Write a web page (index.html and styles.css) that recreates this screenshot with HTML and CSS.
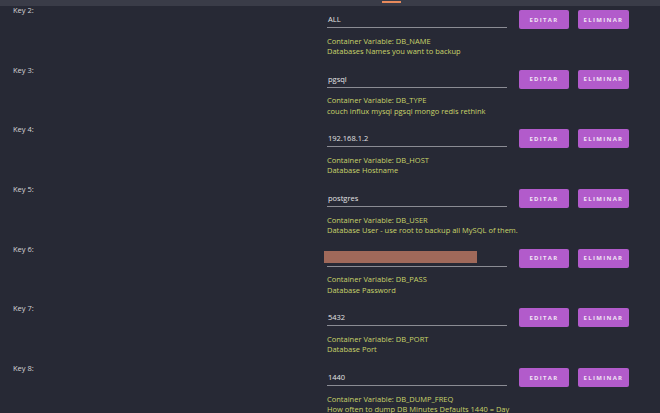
FILE: index.html
```html
<!DOCTYPE html>
<html>
<head>
<meta charset="utf-8">
<link rel="stylesheet" href="styles.css">
</head>
<body>
<div class="topbar"><div class="tab-indicator"></div></div>
<div class="list">
  <div class="row">
    <div class="key">Key 2:</div>
    <div class="field">
      <div class="input">ALL</div>
      <div class="help">Container Variable: DB_NAME</div>
      <div class="help">Databases Names you want to backup</div>
    </div>
    <div class="actions"><button class="btn edit">EDITAR</button><button class="btn del">ELIMINAR</button></div>
  </div>
  <div class="row">
    <div class="key">Key 3:</div>
    <div class="field">
      <div class="input">pgsql</div>
      <div class="help">Container Variable: DB_TYPE</div>
      <div class="help">couch influx mysql pgsql mongo redis rethink</div>
    </div>
    <div class="actions"><button class="btn edit">EDITAR</button><button class="btn del">ELIMINAR</button></div>
  </div>
  <div class="row">
    <div class="key">Key 4:</div>
    <div class="field">
      <div class="input">192.168.1.2</div>
      <div class="help">Container Variable: DB_HOST</div>
      <div class="help">Database Hostname</div>
    </div>
    <div class="actions"><button class="btn edit">EDITAR</button><button class="btn del">ELIMINAR</button></div>
  </div>
  <div class="row">
    <div class="key">Key 5:</div>
    <div class="field">
      <div class="input">postgres</div>
      <div class="help">Container Variable: DB_USER</div>
      <div class="help">Database User - use root to backup all MySQL of them.</div>
    </div>
    <div class="actions"><button class="btn edit">EDITAR</button><button class="btn del">ELIMINAR</button></div>
  </div>
  <div class="row">
    <div class="key">Key 6:</div>
    <div class="field">
      <div class="input redacted-input"><span class="redacted"></span></div>
      <div class="help">Container Variable: DB_PASS</div>
      <div class="help">Database Password</div>
    </div>
    <div class="actions"><button class="btn edit">EDITAR</button><button class="btn del">ELIMINAR</button></div>
  </div>
  <div class="row">
    <div class="key">Key 7:</div>
    <div class="field">
      <div class="input">5432</div>
      <div class="help">Container Variable: DB_PORT</div>
      <div class="help">Database Port</div>
    </div>
    <div class="actions"><button class="btn edit">EDITAR</button><button class="btn del">ELIMINAR</button></div>
  </div>
  <div class="row">
    <div class="key">Key 8:</div>
    <div class="field">
      <div class="input">1440</div>
      <div class="help">Container Variable: DB_DUMP_FREQ</div>
      <div class="help">How often to dump DB Minutes Defaults 1440 = Day</div>
    </div>
    <div class="actions"><button class="btn edit">EDITAR</button><button class="btn del">ELIMINAR</button></div>
  </div>
</div>
</body>
</html>
```
FILE: styles.css
```css
html, body {
  margin: 0;
  padding: 0;
  background: #272935;
  overflow: hidden;
  height: 413px;
}
body {
  font-family: "Open Sans", "DejaVu Sans", sans-serif;
  font-size: 7.5px;
  color: #d6d6d8;
}
.topbar {
  height: 6px;
  background: #3a3c48;
  position: relative;
}
.tab-indicator {
  position: absolute;
  left: 382px;
  top: 1px;
  width: 19px;
  height: 2px;
  background: #e88a5c;
}
.list {
  display: flex;
  flex-direction: column;
  margin-top: -1px;
}
.row {
  display: flex;
  height: 59.7px;
  flex-shrink: 0;
}
.key {
  width: 314px;
  padding-left: 13px;
  line-height: 10px;
  color: #d4d4d6;
}
.field {
  width: 180px;
  display: flex;
  flex-direction: column;
}
.input {
  padding: 9px 0 3px 1px;
  line-height: 10px;
  height: 10px;
  border-bottom: 1px solid #8b8c94;
  color: #e2e2e4;
  margin-bottom: 7.5px;
  position: relative;
}
.redacted {
  position: absolute;
  left: -3px;
  top: 7px;
  width: 153px;
  height: 12px;
  background: #a0695a;
}
.help {
  line-height: 10.5px;
  height: 10.5px;
  color: #c7d36a;
  white-space: nowrap;
}
.actions {
  display: flex;
  gap: 9px;
  margin-left: 12px;
  padding-top: 5px;
  align-items: flex-start;
}
.btn {
  height: 19px;
  border: none;
  border-radius: 2px;
  background: #b25bcb;
  color: #f1e4f5;
  font-family: "Open Sans", "DejaVu Sans", sans-serif;
  font-size: 6px;
  font-weight: 700;
  letter-spacing: 1.3px;
  padding: 0;
  cursor: pointer;
}
.edit { width: 50px; }
.del { width: 51px; }
```
